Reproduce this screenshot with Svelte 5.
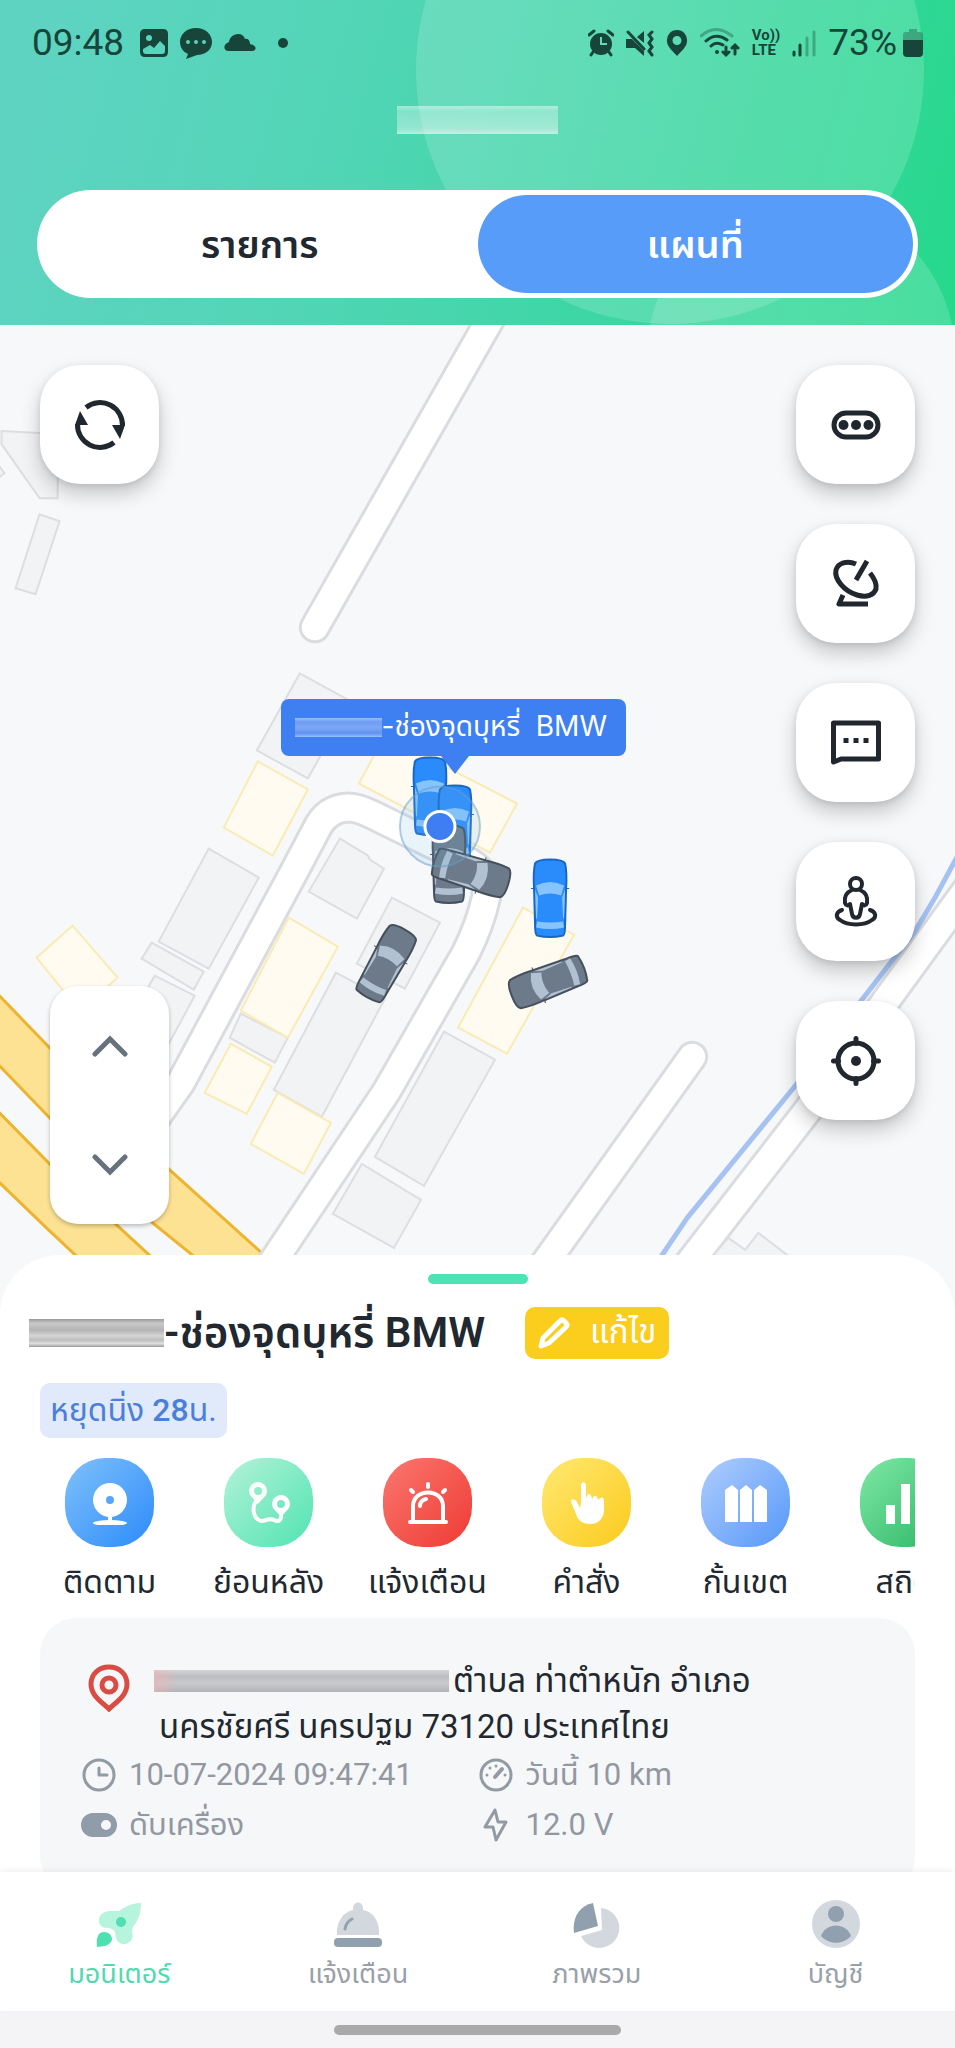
<script lang="ts">
	type Car = { x: number; y: number; heading: number; moving: boolean };

	const greyBuildings = [
		"2,431 40,433 59,433 58,498 40,498 2,444",
		"40,514 60,521 36,594 16,588",
		"-4,461 5,473 -4,480",
		"300,673 351,701 308,778 257,750",
		"209,848 259,877 209,968 159,941",
		"152,942 204,971 194,989 142,958",
		"155,975 195,995 167,1047 130,1020",
		"340,838 368,855 370,859 384,868 357,918 309,891",
		"392,897 440,922 405,988 357,963",
		"241,1013 288,1037 275,1062 230,1037",
		"336,972 385,998 322,1116 274,1089",
		"444,1031 495,1059 424,1185 375,1156",
		"362,1163 421,1199 394,1247 333,1213",
		"700,1270 728,1237 745,1249 758,1232 800,1264",
	];

	const yellowBuildings = [
		"258,761 308,789 273,855 224,827",
		"385,735 517,803 490,852 359,783",
		"73,925 118,977 80,1010 37,957",
		"289,917 338,946 288,1037 241,1010",
		"231,1043 272,1066 247,1113 205,1092",
		"278,1092 331,1122 304,1173 251,1143",
		"523,907 574,934 507,1053 458,1027",
	];

	const streets = [
		"M315 627 L496 309",
		"M140 1140 L181 1082 L297 866 L316 830 Q326 808 348 807 Q358 807 372 814 L470 862 Q490 874 486 897 Q480 924 466 952 L387 1090 L279 1252 L258 1284",
		"M692 1056 L530 1283",
		"M672 1284 L807 1110 L887 998 L975 877",
	];

	const cars: Car[] = [
		{ x: 430, y: 796, heading: 0, moving: true },
		{ x: 455, y: 824, heading: 0, moving: true },
		{ x: 449, y: 864, heading: 0, moving: false },
		{ x: 471, y: 872, heading: 107, moving: false },
		{ x: 386, y: 963, heading: 29, moving: false },
		{ x: 548, y: 981, heading: 249, moving: false },
		{ x: 550, y: 898, heading: 0, moving: true },
	];

	const tools = [
		{ icon: more, label: "เพิ่มเติม" },
		{ icon: satellite, label: "ดาวเทียม" },
		{ icon: chat, label: "ข้อความ" },
		{ icon: streetView, label: "สตรีทวิว" },
		{ icon: locate, label: "ตำแหน่งของฉัน" },
	];

	const actions = [
		{ icon: follow, label: "ติดตาม", tone: "blue" },
		{ icon: route, label: "ย้อนหลัง", tone: "mint" },
		{ icon: siren, label: "แจ้งเตือน", tone: "red" },
		{ icon: pointer, label: "คำสั่ง", tone: "yellow" },
		{ icon: fence, label: "กั้นเขต", tone: "sky" },
		{ icon: stats, label: "สถิติ", tone: "green" },
	];

	const pages = [
		{ icon: rocket, label: "มอนิเตอร์" },
		{ icon: bell, label: "แจ้งเตือน" },
		{ icon: pie, label: "ภาพรวม" },
		{ icon: account, label: "บัญชี" },
	];

	let tab = $state("map");
	let page = $state("มอนิเตอร์");
</script>

{#snippet more()}
	<rect x="4" y="14" width="44" height="24" rx="12" stroke-width="5" />
	<g class="solid"><circle cx="13.5" cy="26" r="5" /><circle cx="26" cy="26" r="5" /><circle cx="38.5" cy="26" r="5" /></g>
{/snippet}

{#snippet satellite()}
	<path d="M26 6 C17 2 8 5 6 12 C4 21 14 33 27 37 C37 40 44 37 46 31 C47 26 44 20 40 15" stroke-width="5" />
	<path d="M37 3 L26 22 M13 37 L9 46 H38" stroke-width="5" stroke-linejoin="round" />
{/snippet}

{#snippet chat()}
	<path d="M3.5 45 V6 H48.5 V42 H11 Z" stroke-width="5" stroke-linejoin="round" />
	<path d="M13.5 23.5 h5 M23.5 23.5 h5 M33.5 23.5 h5" stroke-width="5" />
{/snippet}

{#snippet streetView()}
	<g stroke-width="4" stroke-linecap="round" stroke-linejoin="round">
		<circle cx="26" cy="8" r="6" />
		<path d="M22 14 C17 16 14 20 15 27 C16 30 18 30 20 28 L22 38 C23 43 29 43 30 38 L32 28 C34 30 36 30 37 27 C38 20 35 16 30 14" />
		<path d="M12 34 C6 36 5 41 10 44 C18 50 34 50 42 44 C47 41 46 36 40 34" />
	</g>
{/snippet}

{#snippet locate()}
	<circle cx="26" cy="26" r="18" stroke-width="5" />
	<path d="M26 3.5 v5 M26 43.5 v5 M3.5 26 h5 M43.5 26 h5" stroke-width="5" stroke-linecap="round" />
	<circle class="solid" cx="26" cy="26" r="5" />
{/snippet}

{#snippet follow()}
	<path fill-rule="evenodd" d="M21 2 a17 17 0 1 1 0 34 a17 17 0 1 1 0 -34 Z M21 15 a4 4 0 1 0 0 8 a4 4 0 1 0 0 -8 Z" />
	<path d="M19 34 h4 v5 h-4 Z" />
	<ellipse cx="21" cy="42" rx="17" ry="3" />
{/snippet}

{#snippet route()}
	<path fill-rule="evenodd" d="M10 1 a9 9 0 0 1 8 13 L10 23 L2 14 A9 9 0 0 1 10 1 Z M10 6 a4 4 0 1 0 0 8 a4 4 0 1 0 0 -8 Z" />
	<path fill-rule="evenodd" d="M33 14 a9 9 0 0 1 8 13 L33 36 L25 27 A9 9 0 0 1 33 14 Z M33 19 a4 4 0 1 0 0 8 a4 4 0 1 0 0 -8 Z" />
	<path class="line" d="M8 20 C3 28 6 38 13 40 C17 41 20 36 26 39 C31 42 34 38 33 33" />
{/snippet}

{#snippet siren()}
	<path class="line" d="M6 41 V25 C6 7 36 7 36 25 V41 M13 25 C13 21 15 19 19 18" />
	<path class="line" d="M3 41 H39 M21 3 v3 M4 9 l2 2 M38 9 l-2 2" />
{/snippet}

{#snippet pointer()}
	<path d="M15 22 V5 C15 0 20 0 20 5 V17 L22 13 Q25 12 26 18 L28 15 Q31 14 32 19 L34 17 Q38 15 38 20 V29 C38 36 33 43 25 43 C17 43 12 40 10 33 L5 21 C5 17 9 18 11 21 L14 27 Z" />
{/snippet}

{#snippet fence()}
	<path d="M0 41 V9 L7 4 L13 9 V41 Z M15 41 V9 L21 4 L27 9 V41 Z M29 41 V9 L35 4 L42 9 V41 Z" />
{/snippet}

{#snippet stats()}
	<path d="M2 24 h9 v19 h-9 Z M17 3 h9 v40 h-9 Z M32 14 h9 v29 h-9 Z" />
{/snippet}

{#snippet rocket()}
	<path class="soft" d="M46 3 C36 3 30 7 24 11 H14 C5 12 1 20 6 26 C9 29 13 27 17 29 C21 31 20 34 21 38 C23 46 34 46 37 39 C39 35 36 32 38 27 C44 20 46 12 46 3 Z" />
	<circle cx="26" cy="22" r="5" />
	<path d="M2 47 C1 38 3 32 9 32 C15 32 19 38 16 42 C12 47 8 46 2 47 Z" />
{/snippet}

{#snippet bell()}
	<path class="soft" d="M3 35 C2 22 9 12 19 10 C18 0 30 0 29 10 C40 12 46 22 45 35 Z" />
	<rect x="0" y="38" width="48" height="9" rx="4" />
	<path class="shine" d="M11 29 Q12 22 18 19" />
{/snippet}

{#snippet pie()}
	<path class="soft" d="M28 8 A20 20 0 1 1 8 36 L29 30 Z" />
	<path d="M20 3 L25 26 L1 33 C-1 18 6 6 20 3 Z" />
{/snippet}

{#snippet account()}
	<circle class="soft" cx="24" cy="24" r="24" />
	<circle cx="24" cy="14" r="8" />
	<path d="M9 36 C14 22 34 22 39 36 C31 45 17 45 9 36 Z" />
{/snippet}

<div class="app">
	<header>
		<div class="status">
			<div class="status-side">
				<span class="clock time">09:48</span>
				<svg width="28" height="28" viewBox="0 0 28 28">
					<path fill-rule="evenodd" d="M5 0 H23 Q28 0 28 5 V23 Q28 28 23 28 H5 Q0 28 0 23 V5 Q0 0 5 0 Z M9 6 a3 3 0 1 0 0 6 a3 3 0 1 0 0 -6 Z M3 22 Q3 25 6 25 H22 Q25 25 25 22 V17 L20 12 L14 19 L10 16 L3 20 Z" />
				</svg>
				<svg width="32" height="32" viewBox="0 0 32 32">
					<path fill-rule="evenodd" d="M16 1 C25 1 32 7 32 15 C32 23 25 28 17 28 L6 32 L8 27 C3 25 0 20 0 15 C0 7 7 1 16 1 Z M8 13 a2 2 0 1 0 0 4 a2 2 0 1 0 0 -4 Z M16 13 a2 2 0 1 0 0 4 a2 2 0 1 0 0 -4 Z M24 13 a2 2 0 1 0 0 4 a2 2 0 1 0 0 -4 Z" />
				</svg>
				<svg width="32" height="20" viewBox="0 0 32 20">
					<path d="M4 18 C-1 17 -1 11 5 9 C6 0 19 -2 21 6 C25 5 26 9 26 11 C33 12 33 18 28 18 Z" />
				</svg>
				<i class="more-dot"></i>
			</div>
			<div class="status-side">
				<svg width="26" height="28" viewBox="0 0 26 28">
					<path fill-rule="evenodd" d="M13 4 a11 11 0 1 1 0 22 a11 11 0 1 1 0 -22 Z M12 8 V16 H19 V14 H14 V8 Z" />
					<path class="stroke" d="M1 6 L6 2 M25 6 L20 2 M5 23 L3 26 M21 23 L23 26" />
				</svg>
				<svg width="28" height="28" viewBox="0 0 28 28">
					<path d="M0 10 H6 L18 22 V27 L9 19 H0 Z M11 8 L18 2 V14 Z" />
					<path class="stroke" d="M2 3 L18 20 M26 3 l-3 3 l3 4 l-3 4 l3 4 l-3 4 l3 4" />
				</svg>
				<svg width="22" height="28" viewBox="0 0 22 28">
					<path fill-rule="evenodd" d="M11 1 a10 10 0 0 1 10 11 C21 18 15 22 11 27 C7 22 1 18 1 12 A10 10 0 0 1 11 1 Z M11 7 a4 4 0 1 0 0 9 a4 4 0 1 0 0 -9 Z" />
				</svg>
				<svg width="40" height="30" viewBox="0 0 40 30">
					<path class="stroke faint" d="M1 8 Q16 -5 32 8" />
					<path class="stroke" d="M6 13 Q16 4 27 12 M11 18 Q16 13 23 17 M26 19 v8 m-3 -3 l3 3 l3 -3 M35 26 v-9 m-3 3 l3 -3 l3 3" />
					<circle cx="17" cy="24" r="2" />
				</svg>
				<span class="volte"><span>Vo))</span><span>LTE</span></span>
				<svg width="24" height="28" viewBox="0 0 24 28">
					<path class="stroke" d="M2 23 v3 M8 16 v10" />
					<path class="stroke faint" d="M15 9 v17 M22 3 v23" />
				</svg>
				<span class="clock">73%</span>
				<svg class="battery" width="20" height="28" viewBox="0 0 20 28">
					<path class="faint-fill" d="M6 0 H14 V3 H17 Q20 3 20 6 V11 H0 V6 Q0 3 3 3 H6 Z" />
					<path d="M0 11 H20 V24 Q20 28 16 28 H4 Q0 28 0 24 Z" />
				</svg>
			</div>
		</div>
		<div class="account-name"></div>
		<div class="tabs">
			<button class:active={tab === "list"} onclick={() => (tab = "list")}>รายการ</button>
			<button class:active={tab === "map"} onclick={() => (tab = "map")}>แผนที่</button>
		</div>
	</header>

	<main class="map">
		<svg class="canvas" viewBox="0 325 955 985" preserveAspectRatio="xMidYMin slice">
			<defs>
				<!-- a car seen from above, heading north -->
				<g id="car">
					<path class="mirror" d="M-19 -10 h4 M15 -10 h4" />
					<path class="body" d="M-15 -35 Q-13 -39 0 -39 Q13 -39 15 -35 Q17 -26 16 -10 L15 26 Q15 36 13 37 Q0 40 -13 37 Q-15 36 -15 26 L-16 -10 Q-17 -26 -15 -35 Z" />
					<path class="glass" d="M-14 -13 Q0 -20 14 -13 L11 -3 Q0 -7 -11 -3 Z M-13 23 Q0 25 13 23 L14 29 Q0 32 -14 29 Z M-15 -9 L-12 -1 L-13 20 L-14 20 Z M15 -9 L12 -1 L13 20 L14 20 Z" />
				</g>
			</defs>

			<path class="highway" d="M-5 990 L50 1047 L170 1169 L262 1252 L285 1273 H215 L190 1252 L153 1222 L50 1117 L-5 1060 Z" />
			<path class="highway" d="M-5 1107 L50 1163 L117 1224 L170 1273 H96 L50 1230 L-5 1177 Z" />

			{#each streets as d}
				<path class="street-edge" {d} />
			{/each}
			{#each streets as d}
				<path class="street" {d} />
			{/each}
			<path class="canal" d="M650 1272 L662 1254 L687 1217 L795 1085 L860 1001 L915 930 L934 898 L960 850" />

			{#each greyBuildings as points}
				<polygon class="building" {points} />
			{/each}
			{#each yellowBuildings as points}
				<polygon class="building shop" {points} />
			{/each}

			{#each cars as car}
				<use href="#car" class:moving={car.moving} class="car" transform="translate({car.x} {car.y}) rotate({car.heading})" />
			{/each}

			<circle class="accuracy" cx="440" cy="826" r="40" />
			<circle class="me" cx="440" cy="826" r="15" />
		</svg>

		<div class="marker">
			<span class="hidden-plate"></span>
			<span>-ช่องจุดบุหรี่&nbsp; BMW</span>
		</div>

		<div class="side left">
			<button class="tool" aria-label="รีเฟรช">
				<svg width="52" height="52" viewBox="0 0 52 52">
					<path d="M12 8.5 A22.5 22.5 0 0 1 48.5 27 M40 43.5 A22.5 22.5 0 0 1 3.5 25" stroke-width="5" />
					<path class="solid" d="M38 26 H51 L46 40 Z M14 26 H1 L6 12 Z" />
				</svg>
			</button>
			<div class="zoom">
				<button aria-label="ซูมเข้า">
					<svg width="36" height="22" viewBox="0 0 36 22"><path d="M3 19 L18 4 L33 19" /></svg>
				</button>
				<button aria-label="ซูมออก">
					<svg width="36" height="22" viewBox="0 0 36 22"><path d="M3 3 L18 18 L33 3" /></svg>
				</button>
			</div>
		</div>

		<div class="side">
			{#each tools as tool}
				<button class="tool" aria-label={tool.label}>
					<svg width="52" height="52" viewBox="0 0 52 52">{@render tool.icon()}</svg>
				</button>
			{/each}
		</div>
	</main>

	<section class="sheet">
		<div class="handle"></div>

		<div class="title">
			<h1><span class="hidden-plate"></span>-ช่องจุดบุหรี่ BMW</h1>
			<button class="edit">
				<svg width="32" height="32" viewBox="0 0 32 32">
					<path d="M3 29 L5 21 L22 4 Q24 2 26 4 L28 6 Q30 8 28 10 L11 26 Z" />
				</svg>
				แก้ไข
			</button>
		</div>

		<p class="badge">หยุดนิ่ง <b>28</b>น.</p>

		<div class="actions">
			{#each actions as action}
				<button>
					<span class="bubble {action.tone}">
						<svg width="42" height="44" viewBox="0 0 42 44">{@render action.icon()}</svg>
					</span>
					{action.label}
				</button>
			{/each}
		</div>

		<article class="card">
			<div class="address">
				<svg width="42" height="48" viewBox="0 0 42 48">
					<path d="M21 3 C31 3 39 10 39 20 C39 32 28 38 21 45 C14 38 3 32 3 20 C3 10 11 3 21 3 Z" />
					<circle cx="21" cy="21" r="7" />
				</svg>
				<p>
					<span class="hidden-plate"></span>ตำบล ท่าตำหนัก อำเภอ<br />
					<span class="second">นครชัยศรี นครปฐม 73120 ประเทศไทย</span>
				</p>
			</div>
			<ul>
				<li>
					<svg width="36" height="36" viewBox="0 0 36 36"><circle cx="18" cy="18" r="15" /><path d="M18 11 V18 H26" /></svg>
					10-07-2024 09:47:41
				</li>
				<li>
					<svg width="36" height="36" viewBox="0 0 36 36">
						<circle cx="18" cy="18" r="15" />
						<path d="M17 20 L24 12" stroke-width="4" />
						<path d="M9 18 h0 M12 11 h0 M18 9 h0 M27 18 h0" />
					</svg>
					วันนี้ 10 km
				</li>
				<li>
					<svg width="36" height="36" viewBox="0 0 36 36">
						<path class="toggle" fill-rule="evenodd" d="M12 6 H24 a12 12 0 0 1 0 24 H12 a12 12 0 0 1 0 -24 Z M25 13 a5 5 0 1 0 0 10 a5 5 0 1 0 0 -10 Z" />
					</svg>
					ดับเครื่อง
				</li>
				<li>
					<svg width="36" height="36" viewBox="0 0 36 36"><path d="M17 3 L7 20 H15 L18 33 L28 15 H20 Z" /></svg>
					12.0 V
				</li>
			</ul>
		</article>
	</section>

	<nav>
		{#each pages as item}
			<a href="#{item.label}" class:current={page === item.label} onclick={() => (page = item.label)}>
				<svg width="48" height="48" viewBox="0 0 48 48">{@render item.icon()}</svg>
				{item.label}
			</a>
		{/each}
	</nav>
	<div class="gesture"><i></i></div>
</div>

<style>
	:global(body) {
		margin: 0;
		background: #fff;
	}

	.app {
		display: flex;
		flex-direction: column;
		min-height: 100vh;
		font-family: Roboto, "Noto Sans Thai", "Noto Sans", sans-serif;
		font-size: 32px;
		color: #212830;
	}

	button {
		padding: 0;
		border: none;
		background: none;
		font: inherit;
		color: inherit;
		cursor: pointer;
	}

	svg {
		flex: none;
	}

	/* header */
	header {
		position: relative;
		overflow: hidden;
		padding: 0 37px 27px;
		background: linear-gradient(105deg, #60d3c3 0%, #52d5b6 35%, #3dd6a4 65%, #26d88c 100%);
	}

	header::before,
	header::after {
		content: "";
		position: absolute;
		border-radius: 50%;
		background: rgba(255, 255, 255, 0.16);
	}

	header::before {
		top: -184px;
		right: 31px;
		width: 508px;
		height: 508px;
	}

	header::after {
		top: 201px;
		right: 0;
		width: 308px;
		height: 308px;
	}

	.status,
	.account-name,
	.tabs {
		position: relative;
		z-index: 1;
	}

	.status {
		display: flex;
		justify-content: space-between;
		align-items: center;
		height: 86px;
		margin: 0 -5px;
		color: #17453a;
		fill: #17453a;
	}

	.status-side {
		display: flex;
		align-items: center;
		gap: 12px;
	}

	.clock {
		font-size: 37px;
		line-height: 40px;
	}

	.time {
		margin-right: 4px;
	}

	.stroke {
		fill: none;
		stroke: #17453a;
		stroke-width: 3;
		stroke-linecap: round;
	}

	.faint {
		opacity: 0.35;
	}

	.faint-fill {
		fill: #17453a;
		opacity: 0.35;
	}

	.more-dot {
		width: 10px;
		height: 10px;
		margin-left: 10px;
		border-radius: 50%;
		background: #17453a;
	}

	.volte {
		display: flex;
		flex-direction: column;
		font-size: 15px;
		font-weight: 700;
		line-height: 15px;
	}

	.battery {
		margin-left: -6px;
	}

	.account-name {
		width: 161px;
		height: 28px;
		margin: 20px auto 56px;
		background: linear-gradient(rgba(255, 255, 255, 0.5), rgba(255, 255, 255, 0.3) 20%, rgba(255, 255, 255, 0.4) 80%, rgba(255, 255, 255, 0.6));
	}

	.tabs {
		display: grid;
		grid-template-columns: 1fr 1fr;
		padding: 5px;
		border-radius: 54px;
		background: #fff;
	}

	.tabs button {
		height: 98px;
		padding-top: 4px;
		border-radius: 49px;
		font-size: 38px;
		font-weight: 600;
	}

	.tabs .active {
		background: #569cf8;
		color: #fff;
	}

	/* map */
	.map {
		flex: 1;
		position: relative;
		display: flex;
		justify-content: space-between;
		box-sizing: border-box;
		min-height: 985px;
		padding: 40px 40px 87px;
		background: #f7f8fa;
	}

	.canvas {
		position: absolute;
		inset: 0;
		width: 100%;
		height: 100%;
	}

	.highway {
		fill: #fde293;
		stroke: #ecb42f;
		stroke-width: 3;
	}

	.street-edge,
	.street,
	.canal {
		fill: none;
		stroke: #dbdcdf;
		stroke-width: 32;
		stroke-linecap: round;
		stroke-linejoin: round;
	}

	.street {
		stroke: #fff;
		stroke-width: 26;
	}

	.canal {
		stroke: #a5c2f2;
		stroke-width: 5;
	}

	.building {
		fill: #f2f3f5;
		stroke: #dddee2;
		stroke-width: 2;
	}

	.shop {
		fill: #fffbf0;
		stroke: #faebb4;
	}

	.car {
		--paint: #6c7a89;
		--trim: #45505c;
		--glass: #b2c1d1;
	}

	.car.moving {
		--paint: #2a8cfb;
		--trim: #1667c8;
		--glass: #86c4fd;
	}

	.body {
		fill: var(--paint);
		stroke: var(--trim);
		stroke-width: 2;
	}

	.glass {
		fill: var(--glass);
	}

	.mirror {
		stroke: var(--trim);
		stroke-width: 1;
	}

	.accuracy {
		fill: rgba(120, 180, 225, 0.16);
		stroke: rgba(100, 160, 200, 0.5);
		stroke-width: 2;
	}

	.me {
		fill: #3f7df2;
		stroke: #fff;
		stroke-width: 3;
	}

	.marker {
		position: absolute;
		top: 374px;
		left: calc(50% - 197px);
		display: flex;
		align-items: center;
		box-sizing: border-box;
		height: 57px;
		padding: 0 19px 0 14px;
		border-radius: 8px;
		background: #3e7ff1;
		color: #fff;
		font-family: Inter, "Noto Sans Thai", sans-serif;
		font-size: 28px;
		white-space: nowrap;
	}

	.marker::after {
		content: "";
		position: absolute;
		top: 100%;
		left: 160px;
		border: 14px solid transparent;
		border-top: 18px solid #3e7ff1;
		border-bottom: none;
	}

	.marker .hidden-plate {
		width: 87px;
		height: 19px;
		background: linear-gradient(#9dbdf8, #6c9cf4 20%, #7da8f5 50%, #5f93f3 80%, #9dbdf8);
	}

	.side {
		position: relative;
		display: flex;
		flex-direction: column;
		gap: 40px;
	}

	.left {
		justify-content: space-between;
	}

	.tool {
		display: grid;
		place-items: center;
		width: 119px;
		height: 119px;
		border-radius: 40px;
		background: #fff;
		box-shadow: 0 10px 20px rgba(0, 0, 0, 0.2), 0 2px 6px rgba(0, 0, 0, 0.1);
	}

	.tool svg {
		fill: none;
		stroke: #20272e;
	}

	.solid {
		fill: #20272e;
		stroke: none;
	}

	.zoom {
		display: flex;
		flex-direction: column;
		width: 119px;
		margin-left: 10px;
		border-radius: 28px;
		background: #fff;
		box-shadow: 0 2px 4px rgba(0, 0, 0, 0.25);
	}

	.zoom button {
		height: 119px;
	}

	.zoom path {
		fill: none;
		stroke: #68727d;
		stroke-width: 5;
		stroke-linecap: round;
	}

	/* bottom sheet */
	.sheet {
		position: relative;
		margin-top: -56px;
		padding: 19px 40px 0;
		border-radius: 60px 60px 0 0;
		background: #fff;
	}

	.handle {
		width: 100px;
		height: 10px;
		margin: 0 auto;
		border-radius: 5px;
		background: #4de3b4;
	}

	.title {
		display: flex;
		align-items: center;
		gap: 40px;
		margin: 23px 0 24px -11px;
	}

	h1 {
		display: flex;
		align-items: center;
		margin: 0;
		font-size: 42px;
		line-height: 52px;
		font-weight: 600;
		white-space: nowrap;
	}

	h1 .hidden-plate {
		width: 135px;
		height: 28px;
		background: linear-gradient(#999, #c9c9c9 15%, #b4b4b4 40%, #d6d6d6 60%, #bdbdbd 75%, #dedede 88%, #999);
	}

	.edit {
		display: flex;
		align-items: center;
		gap: 20px;
		height: 52px;
		padding: 0 13px;
		border-radius: 10px;
		background: #fbcd1d;
		color: #fff;
		font-size: 33px;
		white-space: nowrap;
	}

	.edit path {
		fill: none;
		stroke: #fff;
		stroke-width: 5;
		stroke-linejoin: round;
	}

	.badge {
		width: fit-content;
		margin: 0 0 20px;
		padding: 0 10px;
		border-radius: 10px;
		background: #e0eafb;
		color: #4b7fd8;
		line-height: 55px;
	}

	.badge b {
		font-weight: 500;
	}

	.actions {
		display: flex;
		gap: 20px;
		overflow: hidden;
	}

	.actions button {
		display: flex;
		flex: none;
		flex-direction: column;
		align-items: center;
		gap: 8px;
		width: 139px;
		line-height: 54px;
		white-space: nowrap;
	}

	.bubble {
		display: grid;
		place-items: center;
		width: 89px;
		height: 89px;
		border-radius: 40px;
		fill: #fff;
	}

	.line {
		fill: none;
		stroke: #fff;
		stroke-width: 4;
		stroke-linecap: round;
	}

	.blue {
		background: linear-gradient(135deg, #80c1fb, #2c8bfa);
	}

	.mint {
		background: linear-gradient(135deg, #b4f2d8, #50e4b2);
	}

	.red {
		background: linear-gradient(135deg, #fa776f, #ee3b33);
	}

	.yellow {
		background: linear-gradient(135deg, #ffe873, #fbcb1c);
	}

	.sky {
		background: linear-gradient(135deg, #b0cdfd, #5598f8);
	}

	.green {
		background: linear-gradient(135deg, #80e8a6, #2cb565);
	}

	.card {
		margin-top: 9px;
		padding: 40px 41px 42px;
		border-radius: 36px;
		background: #f6f7f9;
	}

	.address {
		display: flex;
		gap: 24px;
		padding-left: 7px;
		font-size: 33px;
	}

	.address svg {
		margin-top: 6px;
		fill: none;
		stroke: #d94c43;
		stroke-width: 5;
	}

	.address p {
		margin: 0;
		line-height: 46px;
	}

	.address .hidden-plate {
		display: inline-block;
		width: 295px;
		height: 22px;
		margin-right: 4px;
		background: linear-gradient(90deg, rgba(240, 180, 180, 0.6), transparent 8%), linear-gradient(#d4d5d7, #bcbdc1 30%, #c9cacd 60%, #b2b3b7);
	}

	.second {
		padding-left: 5px;
	}

	ul {
		display: grid;
		grid-template-columns: 1fr 1fr;
		margin: 0;
		padding: 0;
		list-style: none;
		color: #9298a1;
		font-size: 31px;
	}

	li {
		display: flex;
		align-items: center;
		gap: 12px;
		line-height: 50px;
	}

	li svg {
		fill: none;
		stroke: #929aa3;
		stroke-width: 3;
		stroke-linecap: round;
		stroke-linejoin: round;
	}

	.toggle {
		fill: #909caa;
		stroke: none;
	}

	/* bottom navigation */
	nav {
		position: relative;
		display: grid;
		grid-template-columns: repeat(4, 1fr);
		margin-top: -20px;
		background: #fff;
		box-shadow: 0 -2px 6px rgba(0, 0, 0, 0.06);
	}

	nav a {
		display: flex;
		flex-direction: column;
		align-items: center;
		gap: 6px;
		padding: 28px 0 17px;
		color: #9aa0a8;
		fill: #91a0af;
		font-size: 27px;
		line-height: 40px;
		text-decoration: none;
	}

	nav .current {
		color: #52d9b0;
		fill: #50dfb0;
	}

	.soft {
		fill: #d3d8de;
	}

	.current .soft {
		fill: #b7f4de;
	}

	.shine {
		fill: none;
		stroke: #91a0af;
		stroke-width: 3;
		stroke-linecap: round;
	}

	.gesture {
		display: grid;
		place-items: center;
		height: 37px;
		background: #f4f4f6;
	}

	.gesture i {
		width: 30%;
		height: 10px;
		border-radius: 5px;
		background: #a9a9a9;
	}
</style>
